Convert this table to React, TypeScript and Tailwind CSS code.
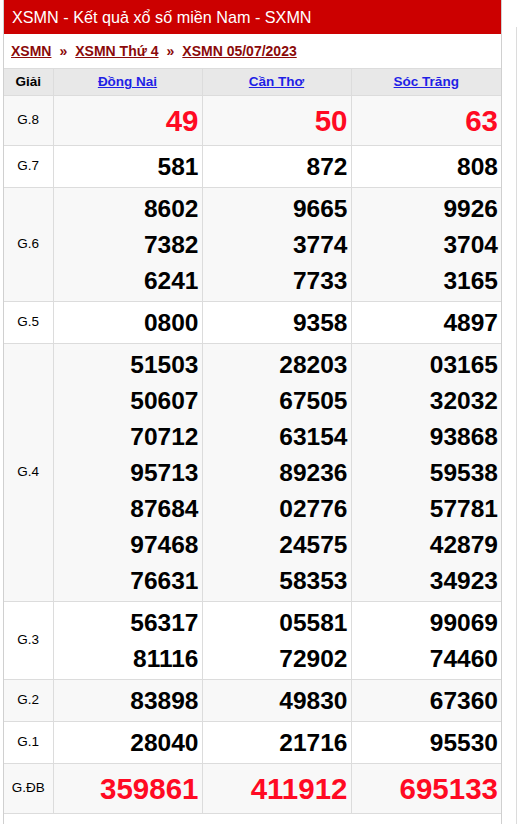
const provinces = ["Đồng Nai", "Cần Thơ", "Sóc Trăng"];

type Prize = { label: string; values: string[][]; special?: boolean };

const prizes: Prize[] = [
  { label: "G.8", values: [["49"], ["50"], ["63"]], special: true },
  { label: "G.7", values: [["581"], ["872"], ["808"]] },
  {
    label: "G.6",
    values: [
      ["8602", "7382", "6241"],
      ["9665", "3774", "7733"],
      ["9926", "3704", "3165"],
    ],
  },
  { label: "G.5", values: [["0800"], ["9358"], ["4897"]] },
  {
    label: "G.4",
    values: [
      ["51503", "50607", "70712", "95713", "87684", "97468", "76631"],
      ["28203", "67505", "63154", "89236", "02776", "24575", "58353"],
      ["03165", "32032", "93868", "59538", "57781", "42879", "34923"],
    ],
  },
  {
    label: "G.3",
    values: [
      ["56317", "81116"],
      ["05581", "72902"],
      ["99069", "74460"],
    ],
  },
  { label: "G.2", values: [["83898"], ["49830"], ["67360"]] },
  { label: "G.1", values: [["28040"], ["21716"], ["95530"]] },
  { label: "G.ĐB", values: [["359861"], ["411912"], ["695133"]], special: true },
];

export default function App() {
  return (
    <div className="relative h-[824px] w-[518px] overflow-hidden bg-white font-['Liberation_Sans',Arial,sans-serif]">
      {/* side box cut off at the right edge */}
      <div className="absolute left-[516px] top-[27px] h-[820px] w-[20px] border-l border-[#dcdcdc]" />

      <div className="ml-[3px] h-[824px] w-[499px] border-x border-[#d0d0d0]">
        <div className="flex h-[34px] items-center bg-[#cc0000] pl-[8px] text-[16.2px] text-white">
          XSMN - Kết quả xổ số miền Nam - SXMN
        </div>

        <div className="flex h-[34px] items-center gap-[8px] pl-[7px] text-[14px] font-bold text-[#8b0a0a]">
          <a className="underline">XSMN</a>
          <span>»</span>
          <a className="underline">XSMN Thứ 4</a>
          <span>»</span>
          <a className="underline">XSMN 05/07/2023</a>
        </div>

        <table className="w-[497px] table-fixed border-collapse">
          <colgroup>
            <col className="w-[49px]" />
            <col className="w-[149px]" />
            <col className="w-[149px]" />
            <col className="w-[150px]" />
          </colgroup>
          <thead>
            <tr className="h-[27px] bg-[#e8e8e8] text-[13.5px] font-bold">
              <th className="border border-l-0 border-[#dcdcdc] text-center text-black">Giải</th>
              {provinces.map((p, i) => (
                <th
                  key={p}
                  className={`border border-[#dcdcdc] text-center ${i === 2 ? "border-r-0" : ""}`}
                >
                  <a className="text-[#1f1fe6] underline">{p}</a>
                </th>
              ))}
            </tr>
          </thead>
          <tbody>
            {prizes.map((prize, r) => (
              <tr key={prize.label} className={r % 2 === 0 ? "bg-[#f8f8f8]" : "bg-white"}>
                <td className="border border-l-0 border-[#dcdcdc] text-center align-middle text-[13.5px] text-black">
                  {prize.label}
                </td>
                {prize.values.map((col, c) => (
                  <td
                    key={c}
                    className={`border border-[#dcdcdc] pt-[3px] pr-[3px] pb-[2px] text-right align-middle ${
                      c === 2 ? "border-r-0" : ""
                    }`}
                  >
                    {col.map((v) => (
                      <div
                        key={v}
                        className={
                          prize.special
                            ? "text-[29.5px] leading-[44px] font-bold text-[#ff0a23]"
                            : "text-[24.5px] leading-[36px] font-bold text-black"
                        }
                      >
                        {v}
                      </div>
                    ))}
                  </td>
                ))}
              </tr>
            ))}
          </tbody>
        </table>
      </div>
    </div>
  );
}
